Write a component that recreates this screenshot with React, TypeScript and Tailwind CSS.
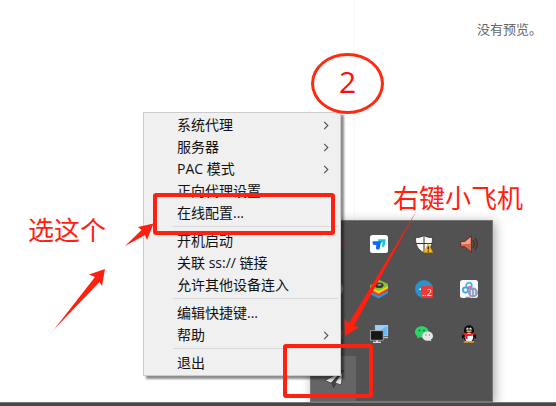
import type { ReactNode } from "react";

type Entry = { label: string; submenu?: boolean };

const menuGroups: Entry[][] = [
  [
    { label: "系统代理", submenu: true },
    { label: "服务器", submenu: true },
    { label: "PAC 模式", submenu: true },
    { label: "正向代理设置" },
    { label: "在线配置..." },
  ],
  [{ label: "开机启动" }, { label: "关联 ss:// 链接" }, { label: "允许其他设备连入" }],
  [{ label: "编辑快捷键..." }, { label: "帮助", submenu: true }],
  [{ label: "退出" }],
];

function Icon({ children }: { children: ReactNode }) {
  return (
    <svg viewBox="0 0 18 18" className="size-[18px] overflow-visible" aria-hidden="true">
      {children}
    </svg>
  );
}

const trayIcons: { name: string; art: ReactNode }[] = [
  { name: "设备", art: <circle cx="9" cy="9" r="9" fill="#a33b36" /> },
  {
    name: "会议",
    art: (
      <>
        <rect width="18" height="18" rx="2.5" fill="#fff" />
        <path d="M8.3 4.3h7.4l-.8 5.2a3 3 0 0 1-3 2.6l.7-4.5H8z" fill="#14c8d6" />
        <path d="M2.5 6.3h8.6l-1.6 8.3H8a2 2 0 0 1-2-2.4l.4-2.1H4.7a2 2 0 0 1-2-1.7z" fill="#0a6cf5" />
      </>
    ),
  },
  {
    name: "安全中心",
    art: (
      <>
        <path d="M9 .4c2.300 1.500 5 2.200 8.500 2.300 0 7-1.900 11.700-8.500 15C2.400 14.400.5 9.700.5 2.700 4 2.600 6.700 1.900 9 .4z" fill="#fafafa" stroke="#262626" strokeWidth=".7" />
        <path d="M9 1v16M1 8.500h16" stroke="#333" strokeWidth="1" />
        <path d="M13.300 8.600l4.600 9H8.700z" fill="#fdb813" stroke="#d99000" strokeWidth=".4" />
        <path d="M13.300 11.500v3.100M13.300 15.500v1.200" stroke="#222" strokeWidth="1.300" />
      </>
    ),
  },
  {
    name: "音量",
    art: (
      <>
        <path d="M.7 6.600h3.800L11.500.800v16.400l-7-5.500H.7z" fill="#d9694a" stroke="#5a241b" strokeWidth=".8" />
        <path d="M1.300 7.200h3.600l5.500-4.700v6.300l-9.100.5z" fill="#f2a58c" />
        <path d="M13 5.300c1.700 2 1.700 5.400 0 7.400M15 3c3 3.300 3 8.700 0 12" fill="none" stroke="#4a2b27" strokeWidth="1.300" />
      </>
    ),
  },
  { name: "同步", art: <circle cx="9" cy="9" r="9" fill="#969696" /> },
  {
    name: "模拟器",
    art: (
      <>
        <path d="M0 11l9 4.500 9-5v2.800L8.500 18.500 0 14z" fill="#219bdc" />
        <path d="M0 8l9 4.500 9-5v3L8.700 16 0 11.500z" fill="#ef3b36" />
        <path d="M0 6.500l9 3.800 9-5v3L8.700 13.500 0 9z" fill="#fbd414" />
        <path d="M0 5.500L9.500 0 18 4v2L8.700 11 0 7.500z" fill="#83c52b" />
        <ellipse cx="9" cy="5.200" rx="4.500" ry="2.800" fill="#303d28" />
        <ellipse cx="9.500" cy="4.800" rx="2" ry="1" fill="#a886b3" />
      </>
    ),
  },
  {
    name: "消息",
    art: (
      <>
        <circle cx="9" cy="9" r="9" fill="#2c91cc" />
        <path d="M3.300 9.200L7 7.400v3.300z" fill="#d7eefb" />
        <rect x="6" y="6" width="12" height="12" rx="2.500" fill="#ee3836" />
        <text x="7" y="15.500" fontSize="9" fill="#fff" fontFamily="Open Sans, sans-serif">
          ..2
        </text>
      </>
    ),
  },
  {
    name: "网盘",
    art: (
      <>
        <rect width="18" height="18" rx="2.500" fill="#f8f8fc" />
        <circle cx="9" cy="5.500" r="2.800" fill="none" stroke="#42b7ee" strokeWidth="1.700" />
        <circle cx="5.500" cy="10" r="2.600" fill="none" stroke="#39a5ec" strokeWidth="1.700" />
        <path d="M8 8.500a2.500 2.500 0 0 1 3-2" fill="none" stroke="#ec5b78" strokeWidth="1.500" />
        <path d="M5.500 17.300h5" stroke="#e5405f" strokeWidth="1" />
        <circle cx="13" cy="12.500" r="4.900" fill="#8e9bbd" />
        <path d="M11.500 10v5M14.500 10v5" stroke="#e7ebf6" strokeWidth="1.300" />
      </>
    ),
  },
  { name: "录制", art: <circle cx="9" cy="9" r="9" fill="#c4453e" /> },
  {
    name: "远程桌面",
    art: (
      <>
        <rect x="5.300" y=".5" width="12.400" height="10" fill="#68b8f3" stroke="#b9d6ea" strokeWidth=".8" />
        <path d="M6 1h11L6 8z" fill="#98d2fa" />
        <path d="M13 12.500h5" stroke="#c8c8c8" strokeWidth="1.400" />
        <rect x=".4" y="5.700" width="12.800" height="9.500" fill="#171717" stroke="#b5b5b5" strokeWidth=".8" />
        <path d="M6 15.500h2v1.200h3V18H3v-1.300h3z" fill="#dddddd" />
      </>
    ),
  },
  {
    name: "微信",
    art: (
      <>
        <path d="M6.800 1.300C3 1.300 0 3.700 0 7c0 1.800 1 3.300 2.400 4.300L1.900 13.500l2.500-1.200c4.700 1.300 9.200-1.300 9.200-5.300 0-3.300-3-5.700-6.800-5.700z" fill="#2bd56c" />
        <circle cx="4.500" cy="5.500" r=".9" fill="#15713b" />
        <circle cx="9" cy="5.500" r=".9" fill="#15713b" />
        <path d="M12.600 6.600c-3 0-5.400 2-5.400 4.600 0 3.200 3.500 5.200 7 4.300l2 1-.4-1.800c1.300-.8 2.200-2.100 2.200-3.500 0-2.600-2.400-4.600-5.400-4.600z" fill="#e6e6e6" />
        <circle cx="11" cy="10" r=".7" fill="#777" />
        <circle cx="14.500" cy="10" r=".7" fill="#777" />
      </>
    ),
  },
  {
    name: "QQ",
    art: (
      <>
        <path d="M9 .3c-3.200 0-5 2.300-5 5.400v1.600C2.400 9.200 1.500 11.500 2 13.500c.5.700 1.300-.3 1.700-1 .5 2.800 2.300 4.700 5.300 4.700s4.800-1.900 5.300-4.700c.4.700 1.200 1.700 1.700 1 .5-2-.4-4.300-2-6.200V5.700C14 2.600 12.200.3 9 .3z" fill="#0c0c0c" />
        <ellipse cx="9" cy="12.300" rx="4.200" ry="4.500" fill="#fff" />
        <ellipse cx="7.500" cy="4" rx="1.100" ry="1.500" fill="#fff" />
        <ellipse cx="10.500" cy="4" rx="1.100" ry="1.500" fill="#fff" />
        <circle cx="7.800" cy="4.200" r=".5" />
        <circle cx="10.200" cy="4.200" r=".5" />
        <ellipse cx="9" cy="6.500" rx="2.800" ry="1" fill="#fba51a" />
        <path d="M3.500 7.300c3.500 1.900 7.500 1.900 11 0l.6 1.900c-2.500 1.500-5.200 2-7.600 1.800v3H5.200v-3.400l-2.300-1.200z" fill="#ed1c2e" />
        <path d="M3.500 17c0-1.200 4.500-1.500 5-.3.500-1.200 6-.9 6 .3 0 1-5.500 1-6 .2-.5.800-5 .8-5-.2z" fill="#f59a17" />
      </>
    ),
  },
  {
    name: "小飞机",
    art: (
      <g stroke="#2b2b2b" strokeWidth=".7" strokeLinejoin="round">
        <path d="M18 .5L0 10.500l6 2.500z" fill="#e6e6e6" />
        <path d="M18 .5L7 13l1.500 4.500L11 13.500z" fill="#4a4a4a" />
        <path d="M18 .5L10 13l6.300 2z" fill="#e0e0e0" />
      </g>
    ),
  },
];

function ContextMenu() {
  return (
    <div
      role="menu"
      className="absolute top-[112px] left-[143px] w-[198px] border border-[#cccccc] bg-[#f0f0f0] py-px shadow-[3px_3px_2px_rgba(0,0,0,0.45)]"
    >
      {menuGroups.map((group, index) => (
        <div key={group[0].label}>
          {index > 0 && <hr className="mt-[2px] mr-[2px] mb-[3px] ml-[29px] border-t border-[#d9d9d9]" />}
          {group.map((entry) => (
            <button
              key={entry.label}
              role="menuitem"
              type="button"
              className="flex h-[22px] w-full items-center justify-between pr-[11px] pl-[33px] text-left text-[14px] leading-[22px] whitespace-nowrap text-[#111111]"
            >
              {entry.label}
              {entry.submenu && (
                <svg viewBox="0 0 6 10" className="h-[9px] w-[6px]" aria-hidden="true">
                  <path d="M1 1l4 4-4 4" fill="none" stroke="#555555" strokeWidth="1.300" />
                </svg>
              )}
            </button>
          ))}
        </div>
      ))}
    </div>
  );
}

function Tray() {
  return (
    <div className="absolute top-[220px] left-[310px] grid w-[183px] grid-cols-4 border border-[#777777] bg-[#525252] shadow-[2px_2px_10px_rgba(0,0,0,0.35)]">
      {trayIcons.map((icon) => (
        <button
          key={icon.name}
          type="button"
          aria-label={icon.name}
          className="flex h-[45px] items-center justify-center last:bg-[#656565]"
        >
          <Icon>{icon.art}</Icon>
        </button>
      ))}
    </div>
  );
}

function Annotations() {
  return (
    <div className="pointer-events-none absolute inset-0 text-[26px] leading-[32px] whitespace-nowrap text-[#ff2010]">
      <div className="absolute top-[53px] left-[311px] flex h-[61px] w-[73px] items-center justify-center rounded-[50%] border-[3px] border-[#ff2a10] pb-1 text-[30px] text-[#ff0a0a]">
        2
      </div>
      <p className="absolute top-[214px] left-[28px]">选这个</p>
      <p className="absolute top-[182px] left-[393px]">右键小飞机</p>
      <div className="absolute top-[193px] left-[153px] h-[42px] w-[182px] rounded-[3px] border-4 border-[#ff2010]" />
      <div className="absolute top-[344px] left-[283px] h-[54px] w-[90px] rounded-[3px] border-4 border-[#ff2010]" />
      <svg viewBox="0 0 556 402" className="absolute top-0 left-0 h-[402px] w-[556px]" fill="#ff2010" aria-hidden="true">
        <path d="M125 246L141.500 230 138 227 153.500 223.500 147 240 145 235z" />
        <path d="M54 329.500L95 277 89 274.500 105 269 102 286 99.500 282z" />
        <path d="M417 210L349 323 344.500 319 345 336 359.500 327 354 326z" />
      </svg>
    </div>
  );
}

export default function App() {
  return (
    <div className="flex min-h-screen flex-col bg-white font-['Open_Sans','Noto_Sans_CJK_SC',sans-serif]">
      <main className="relative flex flex-1 flex-col">
        <section className="ml-[354px] flex h-[220px] justify-end border-l border-[#f8f8f8] pt-[19px] pr-[14px]">
          <p className="text-[13px] leading-5 text-[#666666]">没有预览。</p>
        </section>
        <Tray />
        <ContextMenu />
        <Annotations />
      </main>
      <footer className="relative h-1 border-t border-[#777777] bg-[#484848]" />
    </div>
  );
}
